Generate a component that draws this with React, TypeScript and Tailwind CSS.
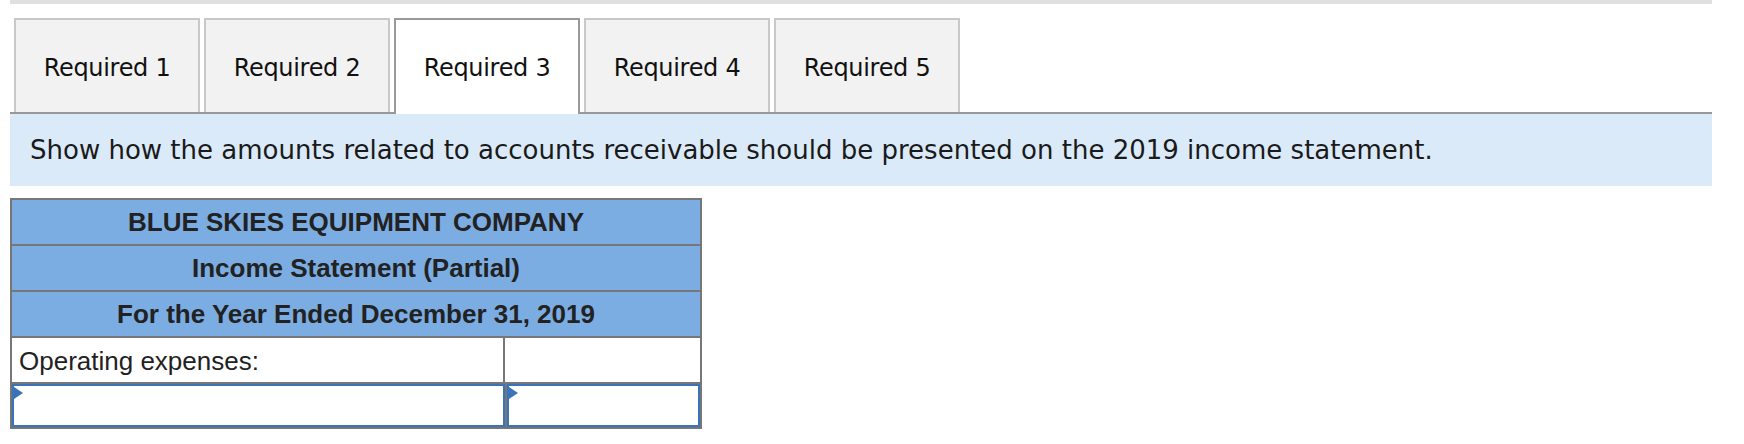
import React from "react";

const tabs = ["Required 1", "Required 2", "Required 3", "Required 4", "Required 5"];
const active = 2;

function InputCell({ className }: { className: string }) {
  return (
    <div className={`relative border-2 border-[#3b73b9] bg-white ${className}`}>
      <span className="absolute left-0 top-[1px] h-0 w-0 border-y-[6px] border-l-[9px] border-y-transparent border-l-[#3b73b9]" />
    </div>
  );
}

export default function App() {
  return (
    <div className="min-h-[444px] w-full bg-white">
      <div className="ml-[10px] w-[1702px]">
        {/* top rule */}
        <div className="h-[4px] bg-[#e0e0e0]" />

        {/* tab strip */}
        <div
          className="mt-[14px] flex gap-[4px] border-b-2 border-[#999] pl-[4px]"
          style={{ fontFamily: '"DejaVu Sans", Verdana, sans-serif' }}
        >
          {tabs.map((t, i) => (
            <div
              key={t}
              className={
                i === active
                  ? "-mb-[2px] flex h-[96px] w-[186px] items-center justify-center border-2 border-b-0 border-[#999] bg-white pb-[2px] pt-[3px] text-[24px] tracking-[-0.3px] text-[#111]"
                  : "flex h-[94px] w-[186px] items-center justify-center border-2 border-b-0 border-[#c8c8c8] bg-[#f2f2f2] pt-[3px] text-[24px] tracking-[-0.3px] text-[#111]"
              }
            >
              {t}
            </div>
          ))}
        </div>

        {/* instruction bar */}
        <div
          className="flex h-[72px] items-center bg-[#dbeaf9] pl-[20px] text-[26px] text-[#1a1a1a]"
          style={{ fontFamily: '"DejaVu Sans", Verdana, sans-serif' }}
        >
          Show how the amounts related to accounts receivable should be presented on the 2019 income statement.
        </div>

        {/* statement table */}
        <div
          className="mt-[12px] w-[692px] border-2 border-[#777] text-[26px] text-[#222]"
          style={{ fontFamily: '"Liberation Sans", Arial, sans-serif' }}
        >
          <div className="flex h-[46px] items-center justify-center border-b-2 border-[#777] bg-[#7badE3] font-bold">
            BLUE SKIES EQUIPMENT COMPANY
          </div>
          <div className="flex h-[46px] items-center justify-center border-b-2 border-[#777] bg-[#7badE3] font-bold">
            Income Statement (Partial)
          </div>
          <div className="flex h-[46px] items-center justify-center border-b-2 border-[#777] bg-[#7badE3] font-bold">
            For the Year Ended December 31, 2019
          </div>
          <div className="flex h-[46px] border-b-2 border-[#777]">
            <div className="flex w-[493px] items-center border-r-2 border-[#777] pl-[7px] pt-[2px]">
              Operating expenses:
            </div>
            <div className="flex-1" />
          </div>
          <div className="flex h-[43px]">
            <InputCell className="w-[493px]" />
            <div className="w-[2px] bg-[#777]" />
            <InputCell className="flex-1" />
          </div>
        </div>
      </div>
    </div>
  );
}
